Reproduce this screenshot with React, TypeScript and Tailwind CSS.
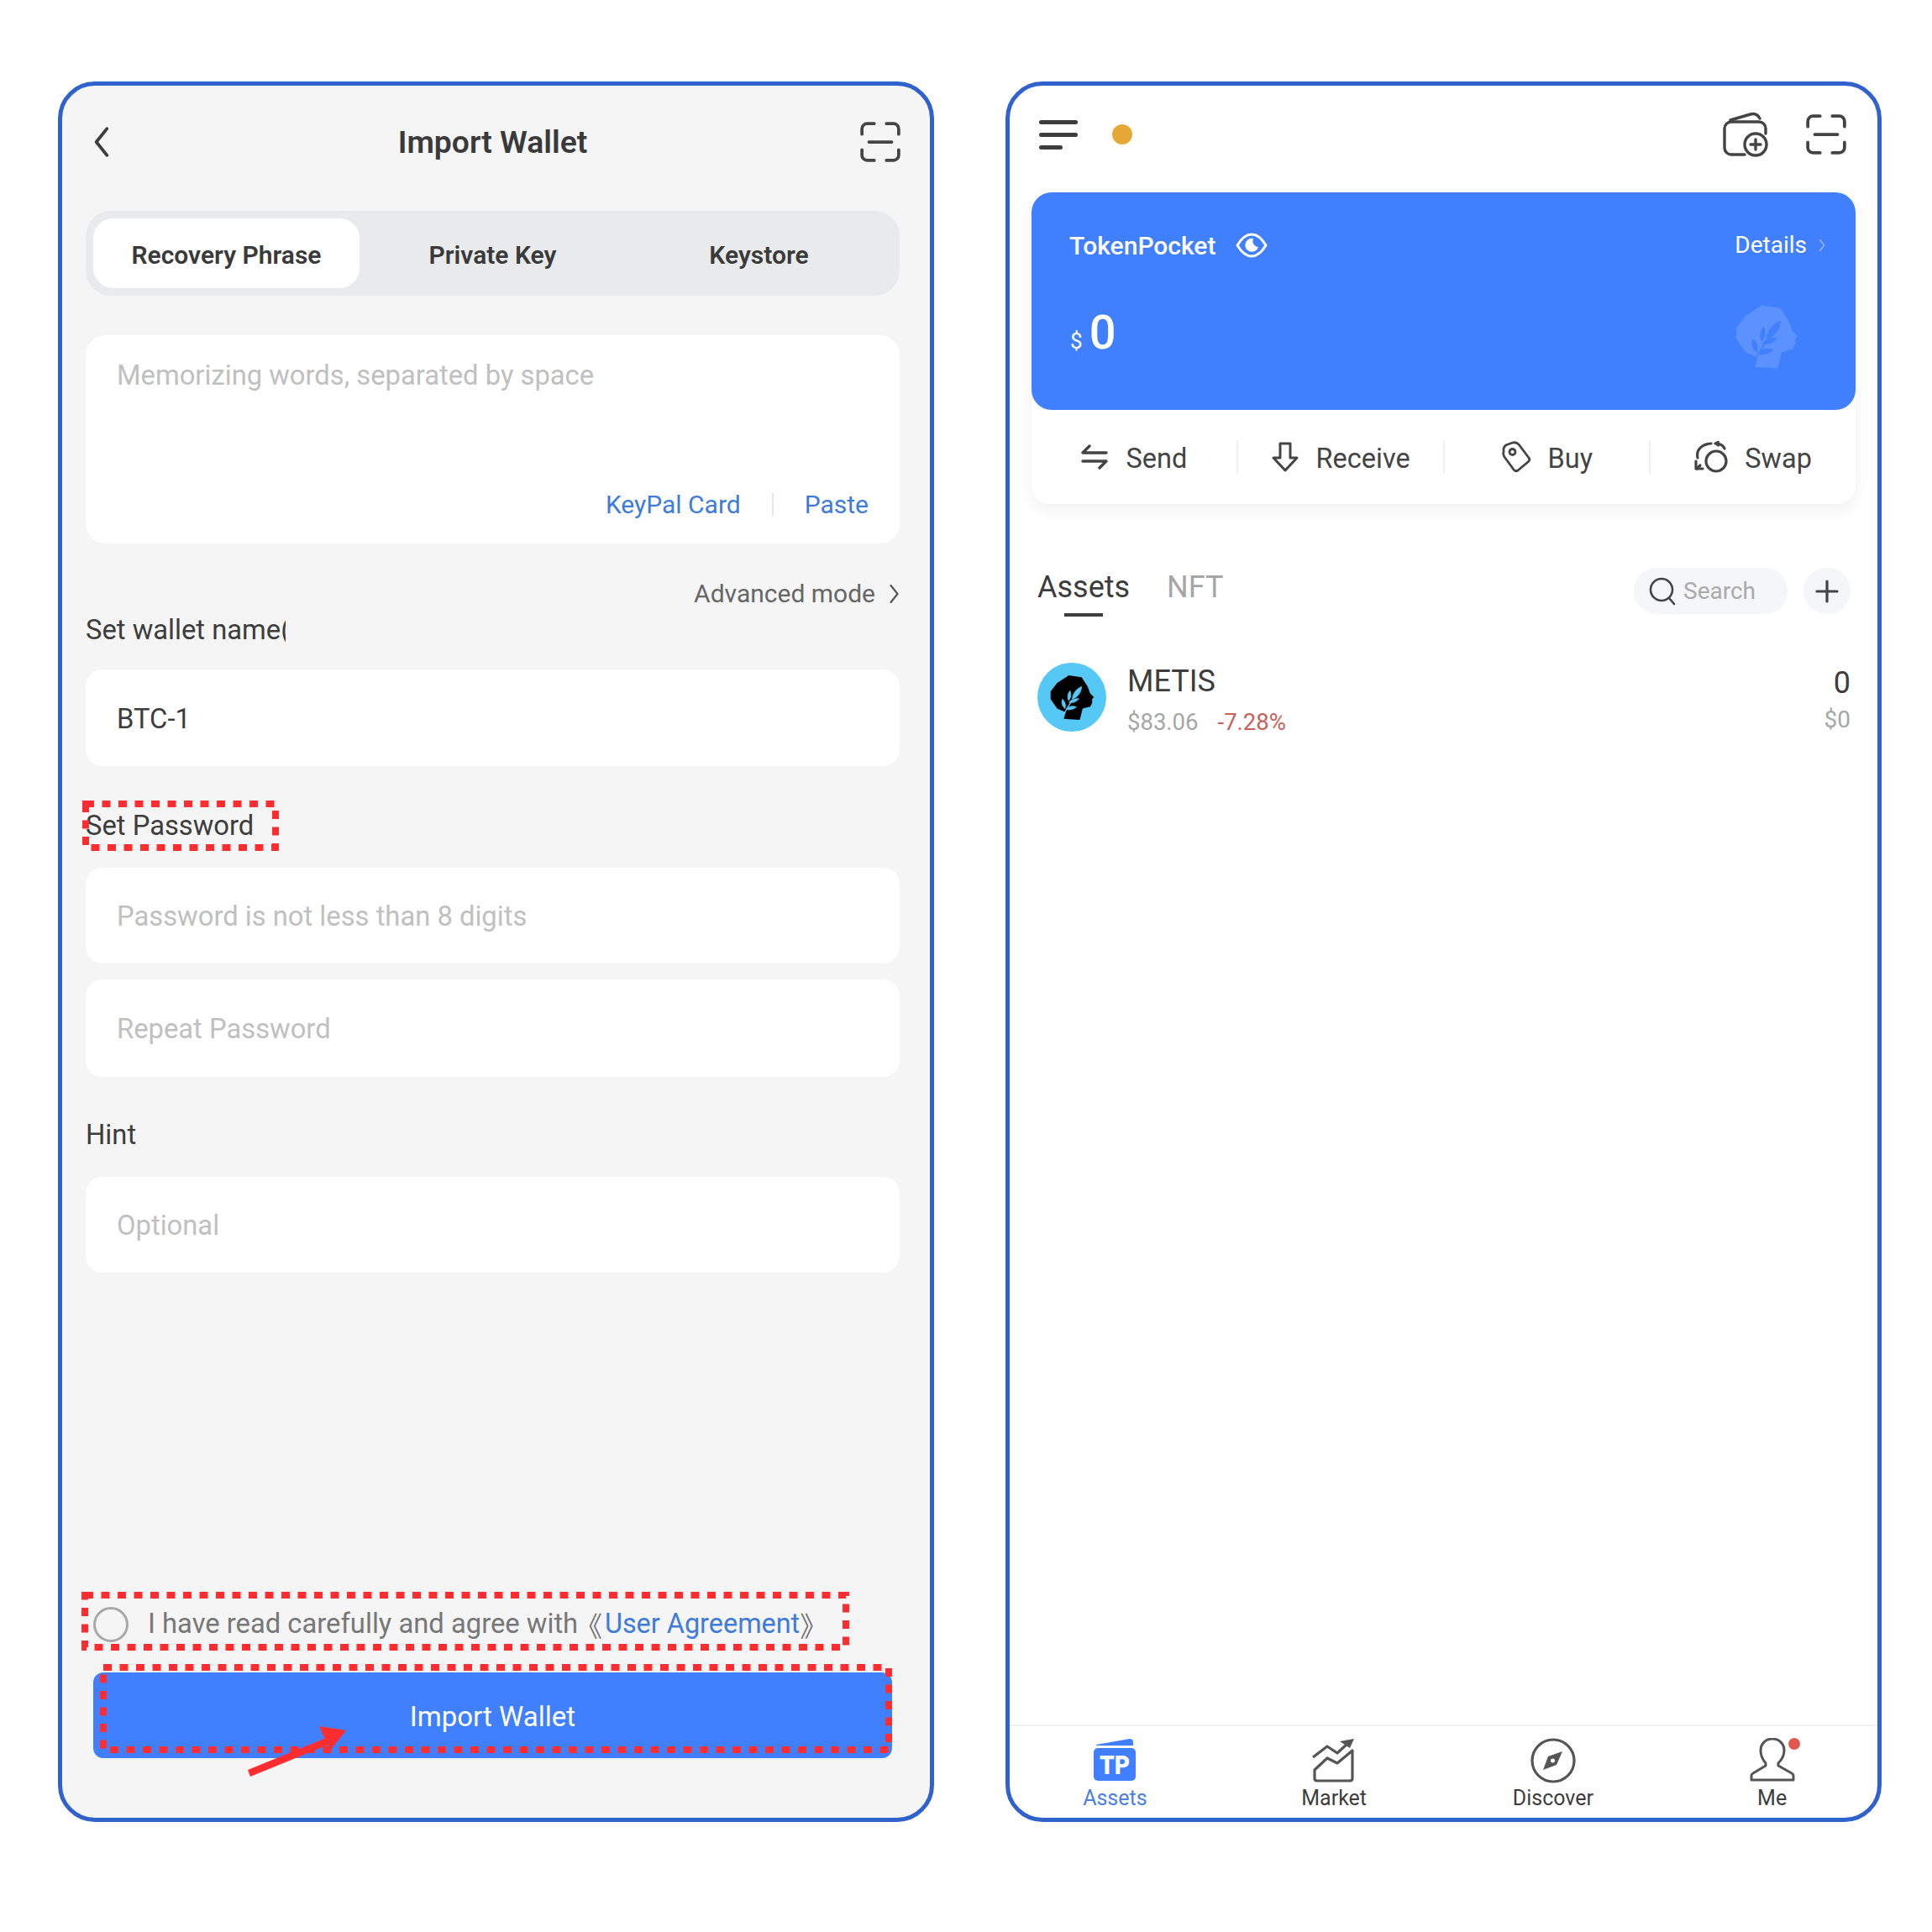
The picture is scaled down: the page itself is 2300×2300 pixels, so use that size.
import type { ReactNode } from "react";

const font = "font-['Roboto','Liberation_Sans',sans-serif]";

function ScanIcon({ className }: { className?: string }) {
  return (
    <svg viewBox="0 0 48 48" className={className} fill="none" stroke="#444" strokeWidth="3.6" strokeLinecap="round">
      <path d="M3 15V9a6 6 0 0 1 6-6h8M31 3h8a6 6 0 0 1 6 6v6M3 33v6a6 6 0 0 0 6 6h8M31 45h8a6 6 0 0 0 6-6v-6M11 24h26" />
    </svg>
  );
}

function Chevron({ className, color = "#555", width = 3 }: { className?: string; color?: string; width?: number }) {
  return (
    <svg viewBox="0 0 12 24" className={className} fill="none" stroke={color} strokeWidth={width} strokeLinecap="round" strokeLinejoin="round">
      <path d="M2 2l8 10-8 10" />
    </svg>
  );
}

// head silhouette used by the METIS logo and the card watermark
function Head({ head, leaf, className }: { head: string; leaf: string; className?: string }) {
  return (
    <svg viewBox="70 60 240 245" className={className}>
      <path
        fill={head}
        d="M170 65L240 75L272 125L285 160L305 180L295 190L296 210L285 230L245 240L230 300L145 295L155 260L110 240L75 190L75 150L110 105Z"
      />
      <g fill={leaf} stroke={leaf} strokeWidth="3" strokeLinejoin="round">
        <path d="M150 262C165 235 178 215 190 195" fill="none" strokeWidth="6" />
        <path d="M190 190C192 160 212 135 240 123C238 155 220 180 190 190Z" />
        <path d="M170 198C162 180 166 160 178 146C186 165 184 185 170 198Z" />
        <path d="M172 208C188 190 205 186 226 188C212 205 195 212 172 208Z" />
        <path d="M152 240C136 228 130 210 138 190C152 205 158 222 152 240Z" />
        <path d="M156 245C172 228 190 224 212 232C196 246 178 250 156 245Z" />
      </g>
    </svg>
  );
}

function DashBox({ className, w, h }: { className: string; w: number; h: number }) {
  return (
    <svg width={w} height={h} className={"absolute pointer-events-none " + className} fill="none">
      <rect x="4" y="4" width={w - 8} height={h - 8} stroke="#ff2d2f" strokeWidth="8" strokeDasharray="10 9.5" />
    </svg>
  );
}

function Field({ placeholder, value, className }: { placeholder?: string; value?: string; className: string }) {
  return (
    <input
      readOnly
      placeholder={placeholder}
      value={value}
      className={
        "w-full shrink-0 rounded-[20px] bg-white px-[37px] pt-[2px] text-[32.75px] text-[#3d3d3d] outline-none placeholder:text-[#c0c0c0] " +
        className
      }
    />
  );
}

function Label({ children, className }: { children: ReactNode; className: string }) {
  return <div className={"h-[40px] shrink-0 text-[32.75px] leading-[40px] text-[#3d3d3d] " + className}>{children}</div>;
}

function ImportPhone() {
  return (
    <div className="relative flex h-[2072px] w-[1043px] shrink-0 flex-col rounded-[44px] border-[5px] border-[#2f62cc] bg-[#f5f5f6] pr-[36px] pl-[28px]">
      <div className="mb-[15px] flex h-[134px] shrink-0 items-center">
        <div className="w-[48px] pl-[8px]">
          <Chevron className="h-[38px] w-[22px] rotate-180" color="#3d3d3d" width={2.4} />
        </div>
        <div className="flex-1 pt-[2px] text-center text-[37.3px] font-semibold text-[#3a3a3a]">Import Wallet</div>
        <ScanIcon className="-mr-[2px] h-[50px] w-[50px]" />
      </div>

      <div className="flex h-[101px] shrink-0 rounded-[30px] bg-[#e9eaec] p-[9px] text-[30px] font-semibold text-[#3a3a3a]">
        <div className="flex flex-1 items-center justify-center rounded-[24px] bg-white pt-[3px]">Recovery Phrase</div>
        <div className="flex flex-1 items-center justify-center pt-[3px]">Private Key</div>
        <div className="flex flex-1 items-center justify-center pt-[3px]">Keystore</div>
      </div>

      <div className="mt-[47px] flex h-[248px] shrink-0 flex-col rounded-[24px] bg-white px-[37px]">
        <div className="mt-[28px] text-[32.75px] leading-[40px] text-[#c0c0c0]">Memorizing words, separated by space</div>
        <div className="mt-auto mb-[26px] flex items-center justify-end text-[30px] leading-[40px] text-[#3f7bd9]">
          <span>KeyPal Card</span>
          <span className="mx-[37px] h-[28px] w-[2px] bg-[#e6e6e6]" />
          <span>Paste</span>
        </div>
      </div>

      <div className="mt-[39px] flex h-[40px] shrink-0 items-center justify-end pt-[1px] text-[30px] text-[#666]">
        Advanced mode
        <Chevron className="ml-[16px] h-[24px] w-[13px]" color="#555" width={2.2} />
      </div>

      <Label className="mt-[4px] w-[238px] overflow-hidden whitespace-nowrap">Set wallet name(</Label>
      <Field value="BTC-1" className="mt-[27px] h-[115px]" />
      <Label className="mt-[51px]">Set Password</Label>
      <Field placeholder="Password is not less than 8 digits" className="mt-[30px] h-[114px]" />
      <Field placeholder="Repeat Password" className="mt-[19px] h-[116px]" />
      <Label className="mt-[49px]">Hint</Label>
      <Field placeholder="Optional" className="mt-[30px] h-[114px]" />

      <div className="mt-auto flex h-[44px] shrink-0 items-center pt-[1px] text-[32.75px] whitespace-nowrap text-[#777]">
        <span className="ml-[9px] mr-[23px] h-[42px] w-[42px] shrink-0 rounded-full border-[3px] border-[#a8a8a8]" />
        I have read carefully and agree with
        <span className="-ml-[4px] font-['Noto_Sans_CJK_SC',sans-serif]">《</span>
        <span className="ml-[3px] text-[32.4px] text-[#3f7bd9]">User Agreement</span>
        <span className="font-['Noto_Sans_CJK_SC',sans-serif]">》</span>
      </div>
      <div className="mx-[9px] mt-[36px] mb-[71px] flex h-[102px] shrink-0 items-center justify-center rounded-[12px] bg-[#4080ff] pt-[3px] text-[33px] text-white">
        Import Wallet
      </div>

      <DashBox className="left-[24px] top-[851px]" w={234} h={60} />
      <DashBox className="left-[23px] top-[1793px]" w={914} h={70} />
      <DashBox className="left-[45px] top-[1879px]" w={943} h={106} />
      <svg width="140" height="70" className="pointer-events-none absolute left-[216px] top-[1947px]" fill="#ff2d2f">
        <path d="M5 58L98 20L101 28L8 66Z" />
        <path d="M90 6L122 11L103 35Z" />
      </svg>
    </div>
  );
}

function ActionItem({ icon, label, last }: { icon: ReactNode; label: string; last?: boolean }) {
  return (
    <div className={"flex h-[40px] flex-1 items-center justify-center gap-[20px] text-[32.5px] text-[#444] " + (last ? "" : "border-r-2 border-[#f0f0f0]")}>
      {icon}
      <span className="pt-[5px]">{label}</span>
    </div>
  );
}

function NavItem({ icon, label, active, children }: { icon: ReactNode; label: string; active?: boolean; children?: ReactNode }) {
  return (
    <div className="relative flex flex-1 flex-col items-center pt-[14px]">
      {icon}
      {children}
      <div className={"mt-[2px] text-[25px] leading-[32px] " + (active ? "text-[#4a80e0]" : "text-[#3d3d3d]")}>{label}</div>
    </div>
  );
}

function AssetsPhone() {
  return (
    <div className="flex h-[2072px] w-[1043px] shrink-0 flex-col rounded-[44px] border-[5px] border-[#2f62cc] bg-white">
      <div className="mb-[11px] flex h-[116px] shrink-0 items-center pr-[36px] pl-[35px]">
        <div className="flex w-[46px] flex-col gap-[10px]">
          <div className="h-[5px] w-[46px] rounded-full bg-[#3d3d3d]" />
          <div className="h-[5px] w-[46px] rounded-full bg-[#3d3d3d]" />
          <div className="h-[5px] w-[28px] rounded-full bg-[#3d3d3d]" />
        </div>
        <div className="ml-[41px] h-[24px] w-[24px] rounded-full bg-[#e6a935]" />
        <svg viewBox="0 0 56 56" className="ml-auto h-[56px] w-[56px]" fill="none" stroke="#444" strokeWidth="3.4" strokeLinecap="round">
          <path d="M27 52H11a8 8 0 0 1-8-8V21a8 8 0 0 1 8-8h33a8 8 0 0 1 8 8v6" />
          <path d="M10 11L34 4q7-2 11 5" />
          <circle cx="40" cy="40" r="13" />
          <path d="M40 34v12M34 40h12" />
        </svg>
        <ScanIcon className="ml-[43px] h-[50px] w-[50px]" />
      </div>

      <div className="mx-[26px] shrink-0 rounded-[22px] bg-white shadow-[0_8px_20px_rgba(0,0,0,0.06)]">
        <div className="relative h-[259px] rounded-[24px] bg-[#4080ff] pr-[36px] pl-[45px] text-white">
          <div className="flex h-[126px] items-center">
            <span className="text-[30px] font-medium">TokenPocket</span>
            <svg viewBox="0 0 38 30" className="ml-[24px] h-[30px] w-[38px]" fill="none" stroke="#fff" strokeWidth="3">
              <path d="M2 15C8 5 13 2 19 2s11 3 17 13c-6 10-11 13-17 13S8 25 2 15Z" strokeLinejoin="round" />
              <path d="M21 7a8 8 0 1 0 6 10a7 7 0 0 1-6-10Z" fill="#fff" stroke="none" />
            </svg>
            <span className="ml-auto text-[28px]">Details</span>
            <Chevron className="ml-[14px] h-[16px] w-[8px]" color="#bcd3ff" width={1.6} />
          </div>
          <div className="mt-[13px] flex items-baseline">
            <span className="mr-[8px] ml-[1px] text-[26px]">$</span>
            <span className="text-[56px] leading-[56px] font-medium">0</span>
          </div>
          <Head head="#5b92ff" leaf="#4080ff" className="absolute top-[133px] right-[67px] h-[78px] w-[77px]" />
        </div>
        <div className="flex h-[112px] items-center">
          <ActionItem
            label="Send"
            icon={
              <svg viewBox="0 0 34 30" className="h-[30px] w-[34px]" fill="none" stroke="#444" strokeWidth="3.4" strokeLinecap="round" strokeLinejoin="round">
                <path d="M31 10H3l8-8M3 20h28l-8 8" />
              </svg>
            }
          />
          <ActionItem
            label="Receive"
            icon={
              <svg viewBox="0 0 34 36" className="h-[36px] w-[34px]" fill="none" stroke="#444" strokeWidth="3" strokeLinejoin="round">
                <path d="M11 2h12v17h8L17 34 3 19h8Z" />
              </svg>
            }
          />
          <ActionItem
            label="Buy"
            icon={
              <svg viewBox="-1 -1 36 38" className="h-[38px] w-[36px]" fill="none" stroke="#444" strokeWidth="2.8" strokeLinejoin="round">
                <path d="M2 8Q3 4 7 3L13 1Q17 0 20 3L32 19Q34 22 31 24L19 34Q16 36 14 33L3 18Q1 15 2 12Z" />
                <circle cx="12.5" cy="12" r="3.5" />
              </svg>
            }
          />
          <ActionItem
            last
            label="Swap"
            icon={
              <svg viewBox="0 0 40 38" className="h-[38px] w-[40px]" fill="none" stroke="#444" strokeWidth="3.2" strokeLinecap="round" strokeLinejoin="round">
                <circle cx="26" cy="24" r="12" />
                <path d="M4 20C2 11 8 4 20 3" />
                <path d="M27 3Q34 4 36 9" />
                <path d="M29 0l-5 3 5 3Z" fill="#444" strokeWidth="1.6" />
                <path d="M2 24v9h8" />
                <path d="M3 33l4-4" />
              </svg>
            }
          />
        </div>
      </div>

      <div className="mt-[76px] flex shrink-0 items-start pr-[32px] pl-[33px]">
        <div className="flex flex-col items-center">
          <div className="pt-[1px] text-[36px] leading-[44px] text-[#3d3d3d]">Assets</div>
          <div className="mt-[9px] h-[4px] w-[46px] bg-[#3d3d3d]" />
        </div>
        <div className="ml-[44px] pt-[1px] text-[36px] leading-[44px] text-[#a6a6a6]">NFT</div>
        <div className="ml-auto flex h-[55px] w-[183px] items-center rounded-full bg-[#f5f6f7] pl-[18px] text-[28px] text-[#aaa]">
          <svg viewBox="0 0 34 34" className="h-[34px] w-[34px]" fill="none" stroke="#444" strokeWidth="2.6" strokeLinecap="round">
            <circle cx="15" cy="15" r="13" />
            <path d="M24 25l6 7" />
          </svg>
          <span className="ml-[7px] pt-[1px]">Search</span>
        </div>
        <div className="ml-[19px] flex h-[55px] w-[56px] items-center justify-center rounded-full bg-[#f5f6f7]">
          <svg viewBox="0 0 28 28" className="h-[28px] w-[28px]" fill="none" stroke="#444" strokeWidth="3.2" strokeLinecap="round">
            <path d="M14 2v24M2 14h24" />
          </svg>
        </div>
      </div>

      <div className="mt-[55px] flex shrink-0 pr-[32px] pl-[33px]">
        <div className="relative h-[82px] w-[82px] rounded-full bg-[#55c8f6]">
          <Head head="#000" leaf="#55c8f6" className="absolute top-[14px] left-[14px] h-[55px] w-[55px]" />
        </div>
        <div className="ml-[25px]">
          <div className="text-[36px] leading-[44px] text-[#3d3d3d]">METIS</div>
          <div className="mt-[5px] text-[27.5px] leading-[44px] text-[#a6a6a6]">
            $83.06
            <span className="ml-[23px] text-[#c9605a]">-7.28%</span>
          </div>
        </div>
        <div className="ml-auto text-right">
          <div className="mt-[2px] text-[36px] leading-[44px] text-[#3d3d3d]">0</div>
          <div className="text-[28px] leading-[44px] text-[#a6a6a6]">$0</div>
        </div>
      </div>

      <div className="mt-auto h-[111px] shrink-0 border-t-2 border-[#f1f1f1]">
        <div className="-mx-[5px] flex">
          <NavItem
            active
            label="Assets"
            icon={
              <svg viewBox="0 0 52 54" className="h-[54px] w-[52px]">
                <path d="M4 8L44 1q4 0 4 4v4H4Z" fill="#4080ff" />
                <rect x="1" y="12" width="50" height="39" rx="5" fill="#4080ff" />
                <text x="26" y="43" textAnchor="middle" fontSize="31" fontWeight="900" fill="#fff" fontFamily="Roboto" textLength="36" lengthAdjust="spacingAndGlyphs">TP</text>
              </svg>
            }
          />
          <NavItem
            label="Market"
            icon={
              <svg viewBox="-1 -1 52 54" className="h-[54px] w-[52px]" fill="none" stroke="#555" strokeWidth="3.2" strokeLinejoin="round">
                <path d="M0 22L17 9l12 8L42 5" />
                <path d="M32 3L49 0 44 11Z" fill="#555" stroke="none" />
                <path d="M2 37L17 23l12 6L47 14V47q0 3-3 3H5q-3 0-3-3Z" />
              </svg>
            }
          />
          <NavItem
            label="Discover"
            icon={
              <svg viewBox="0 0 54 54" className="h-[54px] w-[54px]" fill="none" stroke="#555" strokeWidth="3.2">
                <circle cx="27" cy="27" r="25" />
                <path d="M38 16L31 32 15 38l6-16Z" fill="#555" stroke="none" />
                <circle cx="26.5" cy="27" r="2.5" fill="#fff" stroke="none" />
              </svg>
            }
          />
          <NavItem
            label="Me"
            icon={
              <svg viewBox="0 0 54 54" className="h-[54px] w-[54px]" fill="none" stroke="#555" strokeWidth="3" strokeLinejoin="round">
                <path d="M19 30C14 24 13 20 13 15C13 6 20 1 27 1C34 1 41 6 41 15C41 21 39 25 34 30V33L50 42Q52 43 52 45V50H2V45Q2 43 4 42L19 33Z" />
              </svg>
            }
          >
            <span className="absolute top-[14px] left-[150px] h-[14px] w-[14px] rounded-full bg-[#e0584f]" />
          </NavItem>
        </div>
      </div>
    </div>
  );
}

export default function App() {
  return (
    <div className={"flex h-[2300px] w-[2300px] gap-[85px] bg-white pt-[97px] pl-[69px] " + font}>
      <ImportPhone />
      <AssetsPhone />
    </div>
  );
}
